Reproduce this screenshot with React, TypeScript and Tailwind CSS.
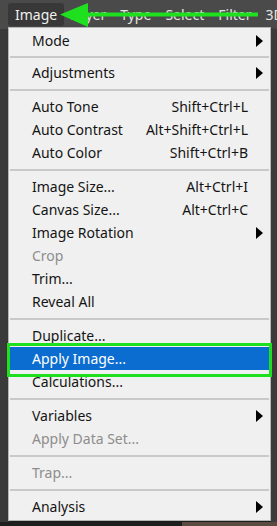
type Item =
  | { kind: "sep"; tight?: boolean }
  | { kind: "item"; label: string; shortcut?: string; sub?: boolean; disabled?: boolean; active?: boolean };

const items: Item[] = [
  { kind: "item", label: "Mode", sub: true },
  { kind: "sep", tight: true },
  { kind: "item", label: "Adjustments", sub: true },
  { kind: "sep" },
  { kind: "item", label: "Auto Tone", shortcut: "Shift+Ctrl+L" },
  { kind: "item", label: "Auto Contrast", shortcut: "Alt+Shift+Ctrl+L" },
  { kind: "item", label: "Auto Color", shortcut: "Shift+Ctrl+B" },
  { kind: "sep" },
  { kind: "item", label: "Image Size...", shortcut: "Alt+Ctrl+I" },
  { kind: "item", label: "Canvas Size...", shortcut: "Alt+Ctrl+C" },
  { kind: "item", label: "Image Rotation", sub: true },
  { kind: "item", label: "Crop", disabled: true },
  { kind: "item", label: "Trim..." },
  { kind: "item", label: "Reveal All" },
  { kind: "sep" },
  { kind: "item", label: "Duplicate..." },
  { kind: "item", label: "Apply Image...", active: true },
  { kind: "item", label: "Calculations..." },
  { kind: "sep" },
  { kind: "item", label: "Variables", sub: true },
  { kind: "item", label: "Apply Data Set...", disabled: true },
  { kind: "sep" },
  { kind: "item", label: "Trap...", disabled: true },
  { kind: "sep" },
  { kind: "item", label: "Analysis", sub: true },
];

function Caret() {
  return (
    <svg width="7" height="12" viewBox="0 0 7 12" className="absolute right-[6px]">
      <path d="M0 0 L7 6 L0 12 Z" fill="#000" />
    </svg>
  );
}

export default function App() {
  return (
    <div className="relative w-[277px] h-[526px] overflow-hidden bg-[#2f2f2f] font-['Noto_Sans',sans-serif]">
      {/* menu bar */}
      <div className="h-[29px] bg-[#4a4a4a] flex items-center pl-[8px] gap-[14px] text-[14px] text-[#e4e4e4] whitespace-nowrap">
        <div className="h-[23px] px-[7px] flex items-center rounded-[3px] bg-[#383838] text-[#f0f0f0]">Image</div>
        <span className="-ml-[8px]">Layer</span>
        <span>Type</span>
        <span>Select</span>
        <span>Filter</span>
        <span>3D</span>
      </div>

      <div className="flex h-[497px]">
        <div className="w-[8px] bg-[#3a3a3a]" />
        {/* dropdown */}
        <div className="w-[263px] h-[494px] -mt-[2px] bg-[#f0f0f0] border border-[#b5b5b5] pt-[1px] text-[14px] text-[#141414] shadow-[2px_2px_3px_rgba(0,0,0,0.5)]">
          {items.map((it, i) =>
            it.kind === "sep" ? (
              <div key={i} className={(it.tight ? "h-[9px]" : "h-[11px]") + " flex items-center px-[1px]"}>
                <div className="h-[2px] w-full bg-[#c9c9c9]" />
              </div>
            ) : (
              <div
                key={i}
                className={
                  "relative h-[23px] flex items-center pl-[22px] pr-[21px] mx-[1px] " +
                  (it.active ? "bg-[#0b6dd0] text-white" : it.disabled ? "text-[#8d8d8d]" : "")
                }
              >
                <span className="flex-1">{it.label}</span>
                {it.shortcut && <span>{it.shortcut}</span>}
                {it.sub && <Caret />}
              </div>
            )
          )}
        </div>
        <div className="flex-1 bg-[#3b3b3b]" />
      </div>

      {/* bottom strip */}
      <div className="absolute left-0 bottom-0 w-[182px] h-[4px] bg-[#1e1e1e]" />
      <div className="absolute left-[182px] bottom-0 right-0 h-[4px] bg-[#5a4a40]" />

      {/* annotation: green highlight box */}
      <div className="absolute left-[7px] top-[343px] w-[265px] h-[34px] border-[3px] border-[#1fe01f]" />

      {/* annotation: green arrow */}
      <svg className="absolute left-0 top-0" width="277" height="30" viewBox="0 0 277 30">
        <rect x="84" y="12.5" width="174" height="4" fill="#1fe01f" />
        <path d="M60 14.5 L88 3 L88 27 Z" fill="#1fe01f" />
      </svg>
    </div>
  );
}
